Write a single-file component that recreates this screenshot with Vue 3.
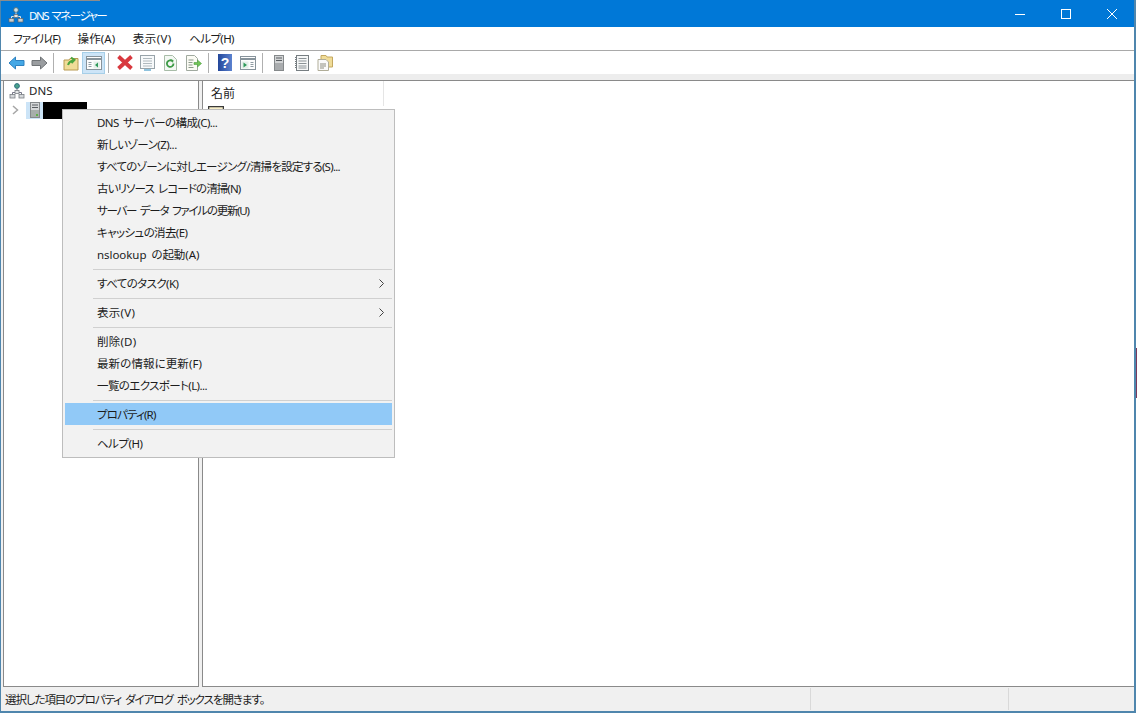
<script setup>
const menus = [
    { label: 'ファイル(F)', ls: -0.8 },
    { label: '操作(A)', ls: 0.1 },
    { label: '表示(V)', ls: 0.4 },
    { label: 'ヘルプ(H)', ls: -0.6 }
]

const contextItems = [
    { label: 'DNS サーバーの構成(C)...', ls: -0.58 },
    { label: '新しいゾーン(Z)...', ls: -0.55 },
    { label: 'すべてのゾーンに対しエージング/清掃を設定する(S)...', ls: -0.74 },
    { label: '古いリソース レコードの清掃(N)', ls: -0.9 },
    { label: 'サーバー データ ファイルの更新(U)', ls: -1.26 },
    { label: 'キャッシュの消去(E)', ls: -0.6 },
    { label: 'nslookup の起動(A)', ls: -0.05 },
    { sep: true },
    { label: 'すべてのタスク(K)', ls: -0.6, arrow: true },
    { sep: true },
    { label: '表示(V)', ls: 0.3, arrow: true },
    { sep: true },
    { label: '削除(D)', ls: 0.2 },
    { label: '最新の情報に更新(F)', ls: 0.1 },
    { label: '一覧のエクスポート(L)...', ls: -0.6 },
    { sep: true },
    { label: 'プロパティ(R)', ls: -0.85, active: true },
    { sep: true },
    { label: 'ヘルプ(H)', ls: -0.5 }
]
</script>

<template>
    <div class="screen">
        <div class="window">
            <div class="titlebar">
                <svg class="title-icon" width="16" height="16" viewBox="0 0 16 16">
                    <circle cx="8" cy="3" r="2.4" fill="#cfe0e6" stroke="#4d6f7c" />
                    <path d="M8 5.500v3M3.500 12V9.500h9V12" fill="none" stroke="#dfe6ea" />
                    <rect x="1" y="11.500" width="5" height="3.500" fill="#c9cdcf" stroke="#5e6468" stroke-width=".7" />
                    <rect x="10" y="11.500" width="5" height="3.500" fill="#c9cdcf" stroke="#5e6468" stroke-width=".7" />
                    <rect x="6" y="7.500" width="4" height="3" fill="#e4e6e7" stroke="#5e6468" stroke-width=".7" />
                </svg>
                <span class="title-text">DNS マネージャー</span>
                <div class="controls">
                    <svg width="46" height="26" viewBox="0 0 46 26"><path d="M18 14.500h10" stroke="#fff" fill="none" /></svg>
                    <svg width="46" height="26" viewBox="0 0 46 26"><rect x="18.500" y="9.500" width="9" height="9" stroke="#fff" fill="none" /></svg>
                    <svg width="46" height="26" viewBox="0 0 46 26"><path d="M18 9l10 10M28 9L18 19" stroke="#fff" fill="none" /></svg>
                </div>
            </div>

            <div class="menubar">
                <span v-for="m in menus" :key="m.label" class="menu-item" :style="{ letterSpacing: m.ls + 'px' }">{{ m.label }}</span>
            </div>

            <div class="toolbar">
                <span class="tool">
                    <svg width="17" height="14" viewBox="0 0 17 14">
                        <path d="M1 7l6.500-6v3.500h8.500v5H7.500V13z" fill="#45a8e6" stroke="#2f82c0" />
                    </svg>
                </span>
                <span class="tool">
                    <svg width="17" height="14" viewBox="0 0 17 14">
                        <path d="M16 7L9.500 1v3.500H1v5h8.500V13z" fill="#9a9da0" stroke="#6f7376" />
                    </svg>
                </span>
                <span class="sep first"></span>
                <span class="tool">
                    <svg width="16" height="16" viewBox="0 0 16 16">
                        <path d="M1 5h5l1-1.500h8V15H1z" fill="#f0dc98" stroke="#b89a52" />
                        <path d="M5 10c1-3 3-4 5-4.500M8 2.500l3.500 2.500-3 3" fill="none" stroke="#4ba53f" stroke-width="2" />
                    </svg>
                </span>
                <span class="tool on">
                    <svg width="16" height="14" viewBox="0 0 16 14">
                        <rect x=".5" y=".5" width="15" height="13" fill="#fdfdfd" stroke="#87939b" />
                        <path d="M1 3h14" stroke="#87939b" stroke-width="2" />
                        <path d="M2.500 6.500h3M2.500 8.500h3M2.500 10.500h3" stroke="#8f9ba2" />
                        <path d="M7.500 5.500h6.500v7H7.500z" fill="#e4efe9" />
                        <path d="M12 6.500L9 9l3 2.500z" fill="#2f9a5a" />
                    </svg>
                </span>
                <span class="sep"></span>
                <span class="tool">
                    <svg width="18" height="17" viewBox="0 0 18 17">
                        <path d="M2.500 2.500l13 12M15.500 2.500l-13 12" stroke="#d8383e" stroke-width="3.800" fill="none" />
                    </svg>
                </span>
                <span class="tool">
                    <svg width="15" height="16" viewBox="0 0 15 16">
                        <rect x=".5" y=".5" width="14" height="13" fill="#f7f9fa" stroke="#98a3a9" />
                        <path d="M3 3.500h9M3 6h9M3 8.500h9M3 11h9" stroke="#b0b9be" />
                        <path d="M4 15h7" stroke="#8fc3de" stroke-width="2" />
                    </svg>
                </span>
                <span class="tool">
                    <svg width="15" height="16" viewBox="0 0 15 16">
                        <path d="M1.500 .5h8l4 4v11h-12z" fill="#f3f8f3" stroke="#a8bca8" />
                        <path d="M10.500 8.500a3.300 3.300 0 1 1-1-2.300" fill="none" stroke="#3c9a45" stroke-width="1.800" />
                        <path d="M7.500 4.500l3 .5-.5 3z" fill="#3c9a45" />
                    </svg>
                </span>
                <span class="tool">
                    <svg width="17" height="16" viewBox="0 0 17 16">
                        <path d="M1.500 .5h8l3 3v12h-11z" fill="#fbfbf4" stroke="#a0a99f" />
                        <path d="M3.500 5h5M3.500 7.500h4M3.500 10h4M3.500 12.500h5" stroke="#8b978b" />
                        <path d="M9 7.500h3.500V5l4 3.500-4 3.500V9.500H9z" fill="#72c455" stroke="#4f9f44" stroke-width=".6" />
                    </svg>
                </span>
                <span class="sep"></span>
                <span class="tool">
                    <svg width="14" height="17" viewBox="0 0 14 17">
                        <defs>
                            <linearGradient id="helpFill" x1="0" y1="0" x2="1" y2="0">
                                <stop offset="0" stop-color="#24479a" />
                                <stop offset="1" stop-color="#5b82cf" />
                            </linearGradient>
                        </defs>
                        <rect width="14" height="17" fill="url(#helpFill)" />
                        <text x="7" y="13.500" class="help-mark">?</text>
                    </svg>
                </span>
                <span class="tool">
                    <svg width="16" height="14" viewBox="0 0 16 14">
                        <rect x=".5" y=".5" width="15" height="13" fill="#fdfdfd" stroke="#87939b" />
                        <path d="M1 3h14" stroke="#87939b" stroke-width="2" />
                        <path d="M1.500 5.500h7v7h-7z" fill="#e4efe9" />
                        <path d="M3.500 6.500L7 9l-3.500 2.500z" fill="#2f9a5a" />
                        <path d="M10.500 6.500h3M10.500 8.500h3M10.500 10.500h3" stroke="#8f9ba2" />
                    </svg>
                </span>
                <span class="sep"></span>
                <span class="tool">
                    <svg width="10" height="16" viewBox="0 0 10 16">
                        <rect x=".5" y=".5" width="9" height="15" fill="#d2d4d5" stroke="#85898b" />
                        <path d="M2 3h6M2 5.500h6" stroke="#5a5e62" />
                        <rect x="1" y="8" width="8" height="7" fill="#a9acae" />
                    </svg>
                </span>
                <span class="tool">
                    <svg width="14" height="16" viewBox="0 0 14 16">
                        <rect x="1.500" y=".5" width="12" height="15" fill="#f6f7f7" stroke="#777e82" />
                        <path d="M3.500 3.500h8M3.500 6h8M3.500 8.500h8M3.500 11h8M3.500 13h8" stroke="#8b9296" />
                        <path d="M.5 2v12" stroke="#777e82" stroke-dasharray="1 1" />
                    </svg>
                </span>
                <span class="tool">
                    <svg width="16" height="16" viewBox="0 0 16 16">
                        <path d="M4 .5h5l1 1.500h5.500v10H4z" fill="#f0dc98" stroke="#c4a860" />
                        <path d="M1 4.500h8l2.500 2.500v8.500H1z" fill="#fafafa" stroke="#b0ad98" />
                        <path d="M3 9h6M3 11h6M3 13h4" stroke="#8d8d80" />
                    </svg>
                </span>
            </div>
            <div class="strip"></div>

            <div class="panes">
                <div class="tree">
                    <div class="tree-row root">
                        <svg width="16" height="16" viewBox="0 0 16 16">
                            <circle cx="8" cy="3" r="2.400" fill="#4aa38a" stroke="#2c6f80" />
                            <path d="M8 5.500v3M3.500 12V9.500h9V12" fill="none" stroke="#778" />
                            <rect x="1" y="11.500" width="5" height="3.500" fill="#d5d8da" stroke="#7b8185" stroke-width=".8" />
                            <rect x="10" y="11.500" width="5" height="3.500" fill="#d5d8da" stroke="#7b8185" stroke-width=".8" />
                            <rect x="6" y="7.500" width="4" height="3" fill="#e5e7e8" stroke="#7b8185" stroke-width=".8" />
                        </svg>
                        <span>DNS</span>
                    </div>
                    <div class="tree-row server">
                        <svg class="chevron" width="7" height="10" viewBox="0 0 7 10">
                            <path d="M1 1l4.500 4L1 9" fill="none" stroke="#a6a6a6" stroke-width="1.500" />
                        </svg>
                        <span class="selected">
                            <svg width="10" height="16" viewBox="0 0 10 16">
                                <rect x=".5" y=".5" width="9" height="15" fill="#d6d8d9" stroke="#85898b" />
                                <path d="M2 3h6M2 5.500h6" stroke="#5a5e62" />
                                <rect x="1" y="8" width="8" height="7" fill="#a7aeaa" />
                                <rect x="6" y="12" width="2" height="2" fill="#5fb048" />
                            </svg>
                        </span>
                        <span class="masked"></span>
                    </div>
                </div>

                <div class="list">
                    <div class="list-head"><span class="col-name">名前</span></div>
                    <svg class="row-icon" width="16" height="8" viewBox="0 0 16 8">
                        <path d="M.5 8V.5h15V8" fill="#f7eec8" stroke="#3a3a3a" stroke-width="1.500" />
                    </svg>
                </div>
            </div>

            <div class="statusbar">
                <span class="status-text">選択した項目のプロパティ ダイアログ ボックスを開きます。</span>
                <span class="status-cell mid"></span>
                <span class="status-cell last"></span>
            </div>

            <div class="context">
                <template v-for="(item, i) in contextItems" :key="i">
                    <div v-if="item.sep" class="ctx-sep"></div>
                    <div v-else class="ctx-item" :class="{ active: item.active }">
                        <span :style="{ letterSpacing: item.ls + 'px' }">{{ item.label }}</span>
                        <svg v-if="item.arrow" class="ctx-arrow" width="5" height="9" viewBox="0 0 5 9">
                            <path d="M.5 .5l4 4-4 4" fill="none" stroke="#444" />
                        </svg>
                    </div>
                </template>
            </div>
        </div>
        <div class="edge-top"></div>
        <div class="edge-right"></div>
    </div>
</template>

<style>
html, body {
    margin: 0;
    background: #fff;
}
</style>

<style scoped>
.screen {
    position: relative;
    width: 1137px;
    height: 714px;
    overflow: hidden;
    background: #fff;
    font-family: "Noto Sans", "Noto Sans CJK JP", sans-serif;
    font-feature-settings: "palt";
    font-size: 11.5px;
    word-spacing: 2px;
    color: #1c1c1c;
}

.window {
    position: relative;
    display: flex;
    flex-direction: column;
    box-sizing: border-box;
    width: 1136px;
    height: 713px;
    background: #f0f0f0;
    border-style: solid;
    border-width: 0 2px 2px 1px;
    border-color: #4f86ad;
}

.titlebar {
    display: flex;
    align-items: center;
    box-sizing: border-box;
    height: 27px;
    flex: none;
    padding: 2px 0 0 7px;
    background: #0078d7;
    color: #fff;
}

.title-icon {
    margin-right: 5px;
}

.title-text {
    flex: 1;
    letter-spacing: -1.5px;
}

.controls {
    display: flex;
    align-self: flex-start;
    margin: -2px -1px 0 0;
}

.menubar {
    display: flex;
    align-items: center;
    height: 22px;
    flex: none;
    padding: 0 0 1px 12px;
    background: #fff;
    border-bottom: 1px solid #a9a9a9;
}

.menu-item {
    margin-right: 17.5px;
}

.toolbar {
    display: flex;
    align-items: center;
    height: 23px;
    flex: none;
    padding-left: 4px;
    background: #fff;
}

.tool {
    display: flex;
    align-items: center;
    justify-content: center;
    box-sizing: border-box;
    width: 23px;
    height: 22px;
}

.tool.on {
    background: #cce4f7;
    border: 1px solid #a6cfe8;
}

.sep {
    width: 1px;
    height: 20px;
    margin: 0 4px 0 3px;
    background: #b0b0b0;
}

.sep.first {
    margin: 0 5px 0 2px;
}

.strip {
    height: 6px;
    flex: none;
    background: #ededed;
    border-bottom: 1px solid #8a8a8a;
}

.panes {
    display: flex;
    flex: 1;
    min-height: 0;
    padding-left: 2px;
    gap: 3px;
    background: #f0f0f0;
}

.tree,
.list {
    position: relative;
    background: #fff;
    border-bottom: 1px solid #8a8a8a;
}

.tree {
    box-sizing: border-box;
    width: 196px;
    border-left: 1px solid #8a8a8a;
    border-right: 1px solid #8a8a8a;
}

.list {
    flex: 1;
    border-left: 1px solid #8a8a8a;
}

.tree-row {
    display: flex;
    align-items: center;
    height: 20px;
}

.tree-row.root {
    height: 19px;
    padding-left: 5px;
    gap: 4px;
}

.tree-row.server {
    padding-left: 8px;
}

.chevron {
    margin-right: 7px;
}

.selected {
    display: flex;
    align-items: center;
    justify-content: center;
    width: 17px;
    height: 17px;
    background: #cce4f7;
}

.masked {
    width: 44px;
    height: 17px;
    background: #000;
}

.list-head {
    height: 25px;
    width: 181px;
    box-sizing: border-box;
    padding: 3px 0 0 8px;
    border-right: 1px solid #e5e5e5;
}

.col-name {
    font-size: 12px;
}

.row-icon {
    display: block;
    margin-left: 5px;
}

.statusbar {
    display: flex;
    align-items: center;
    height: 24px;
    flex: none;
    background: #f0f0f0;
}

.status-text {
    width: 809px;
    padding-left: 4px;
    box-sizing: border-box;
    letter-spacing: -1.07px;
}

.status-cell {
    height: 22px;
    border-left: 1px solid #d9d9d9;
}

.status-cell.mid {
    width: 197px;
}

.status-cell.last {
    flex: 1;
}

/* context menu sits over the panes */
.context {
    position: absolute;
    left: 61px;
    top: 109px;
    box-sizing: border-box;
    width: 333px;
    height: 349px;
    padding: 1px 2px 2px;
    background: #f2f2f2;
    border: 1px solid #bdbdbd;
}

.ctx-item {
    display: flex;
    align-items: center;
    justify-content: space-between;
    height: 22px;
    padding: 0 8px 0 32px;
}

.ctx-item.active {
    margin-top: 1px;
    background: #91c9f7;
}

.ctx-sep {
    height: 1px;
    margin: 4px 0 2px 28px;
    background: #d0d0d0;
}

.ctx-arrow {
    display: block;
}

.help-mark {
    fill: #fff;
    font-family: "Liberation Sans", sans-serif;
    font-size: 14px;
    font-weight: bold;
    text-anchor: middle;
}

.edge-top {
    position: absolute;
    left: 0;
    top: 0;
    width: 100px;
    height: 1px;
    background: #8c8c8c;
}

.edge-right {
    position: absolute;
    left: 1136px;
    top: 348px;
    width: 1px;
    height: 50px;
    background: #7a3a5c;
}
</style>
